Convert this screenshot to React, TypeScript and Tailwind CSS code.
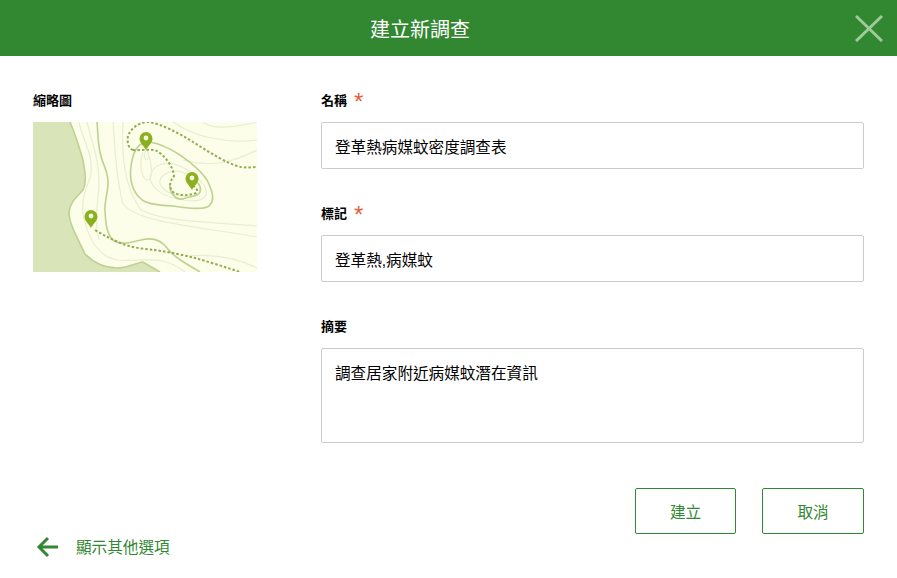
const cjk = "font-['Liberation_Sans','Noto_Sans_CJK_TC',sans-serif]";

const Pin = ({ x, y }: { x: number; y: number }) => (
  <g transform={`translate(${x} ${y})`}>
    <path d="M0 10C-2 6 -6.5 3 -6.5 -1.5A6.5 6.5 0 0 1 6.5 -1.5C6.5 3 2 6 0 10Z" fill="#8bb01f" />
    <circle cx="0" cy="-2" r="2.4" fill="#f4f8e0" />
  </g>
);

const MapThumb = () => (
  <svg viewBox="0 0 224 150" className="mt-3 block h-[150px] w-[224px]">
    <rect width="224" height="150" fill="#fcfee9" />
    <path d="M0 0H37C42 12 46 24 50 38C52 50 54 60 50 68C44 75 37 80 36 90C36 102 44 115 52 132C62 142 72 146 84 146C94 146 102 141 110 140L127 150H0Z" fill="#d9e4b8" />
    <g fill="none" stroke="#e8eed0" strokeWidth="1.2">
      <path d="M46 0C50 20 60 30 58 52C56 62 48 72 50 92C54 112 62 134 84 138C110 140 130 132 152 150" />
      <path d="M54 0C58 18 66 36 66 60C66 80 60 96 66 118" />
      <path d="M80 0C82 30 84 60 90 82C104 100 160 104 224 115" />
      <path d="M90 0C88 34 92 66 108 88C130 100 180 100 224 104" />
      <path d="M140 0C160 14 190 22 224 18" />
      <path d="M170 0C180 8 200 6 224 0" />
      <path d="M150 38C180 46 200 40 224 28" />
      <path d="M124 44C108 56 122 74 150 78C172 82 178 72 170 62C160 48 138 36 124 44Z" />
      <path d="M132 52C120 60 130 72 150 74C168 76 172 68 164 60C156 50 142 46 132 52Z" />
      <path d="M110 30C106 40 108 56 114 58C122 58 118 38 114 28" />
      <path d="M112 30C110 34 112 38 114 38C116 36 116 32 114 28" />
      <path d="M154 134C176 132 200 134 224 146" />
    </g>
    <g fill="none" stroke="#bfd190" strokeWidth="1.6">
      <path d="M37 0C42 12 46 24 50 38C52 50 54 60 50 68C44 75 37 80 36 90C36 102 44 115 52 132C62 142 72 146 84 146C94 146 102 141 110 140L127 150" />
      <path d="M64 0C65 12 65 22 67 30C69 42 75 48 75 60C75 72 71 80 72 90C73 104 74 112 80 118C88 124 98 120 108 118C120 115 128 118 134 126C140 134 150 140 167 150" />
      <path d="M113 20C104 22 100 30 98 44C96 58 100 70 107 76C112 82 124 83 140 84C152 86 170 88 176 84C182 78 180 70 174 58C166 46 154 38 147 33C136 26 124 20 113 20Z" />
      <path d="M137 62C136 70 142 78 150 77C156 74 164 76 167 70C168 66 166 62 164 60" />
    </g>
    <g fill="none" stroke="#93ad52" strokeWidth="2" strokeDasharray="2.5 2">
      <path d="M100 28C95 26 94 20 95 14C98 6 106 0 116 0C128 2 144 10 160 20C176 30 194 42 208 45C214 46 220 45 224 45" />
      <path d="M100 28C108 29 118 26 124 29C132 34 140 44 141 54C136 60 136 66 140 70C146 74 156 74 163 71C166 68 162 66 161 64" />
      <path d="M62 108C72 114 80 118 90 122C100 126 112 127 122 128C136 130 150 133 162 136C176 140 192 145 207 150" />
    </g>
    <Pin x={113} y={18} />
    <Pin x={159} y={58} />
    <Pin x={58} y={96} />
  </svg>
);

const FieldLabel = ({ text, required }: { text: string; required?: boolean }) => (
  <div className="mt-[34px] flex h-5 items-center gap-[7px] text-[13px] leading-5 font-bold text-black">
    <span className="pt-px">{text}</span>
    {required && <span className="pt-1 text-[24px] leading-5 font-normal text-[#e2603f]">*</span>}
  </div>
);

const inputClass =
  "mt-3 block h-[47px] w-full rounded-[2px] border border-[#cccccc] bg-white px-[13px] text-[15.6px] text-black outline-none";

export default function App() {
  return (
    <div className={`flex h-[578px] w-[897px] flex-col overflow-hidden bg-white ${cjk}`}>
      <header className="flex h-14 items-center bg-[#328731] pr-[14px] pl-[370px]">
        <h1 className="flex-1 pt-1 text-xl font-normal text-white">建立新調查</h1>
        <svg viewBox="0 0 28 28" className="h-7 w-7" fill="none" stroke="#9ecb9c" strokeWidth="3">
          <path d="M1 2L27 27M27 2L1 27" />
        </svg>
      </header>

      <div className="flex flex-1">
        <aside className="flex w-[321px] flex-col justify-between pb-[19px] pl-[33px]">
          <div className="pt-[34px]">
            <div className="h-5 pt-px text-[13px] leading-5 font-bold text-black">縮略圖</div>
            <MapThumb />
          </div>
          <div className="flex h-6 items-center gap-[16px] text-[15.6px] text-[#328731]">
            <svg viewBox="0 0 24 24" className="ml-[3px] h-[24px] w-[24px]" fill="none" stroke="#328731" strokeWidth="3">
              <path d="M22 12H3M12 3L3 12L12 21" />
            </svg>
            <span className="pt-[2px]">顯示其他選項</span>
          </div>
        </aside>

        <main className="w-[543px]">
          <FieldLabel text="名稱" required />
          <input className={inputClass} defaultValue="登革熱病媒蚊密度調查表" readOnly />
          <FieldLabel text="標記" required />
          <input className={inputClass} defaultValue="登革熱,病媒蚊" readOnly />
          <FieldLabel text="摘要" />
          <textarea
            className="mt-3 block h-[95px] w-full resize-none rounded-[2px] border border-[#cccccc] bg-white px-[13px] py-[13px] text-[15.6px] text-black outline-none"
            defaultValue="調查居家附近病媒蚊潛在資訊"
            readOnly
          />
          <div className="mt-[45px] flex justify-end gap-[26px]">
            <button className="h-[46px] w-[101px] rounded-[2px] border border-[#328731] pt-[3px] text-[15.6px] text-[#328731]">建立</button>
            <button className="h-[46px] w-[102px] rounded-[2px] border border-[#328731] pt-[3px] text-[15.6px] text-[#328731]">取消</button>
          </div>
        </main>
      </div>
    </div>
  );
}
